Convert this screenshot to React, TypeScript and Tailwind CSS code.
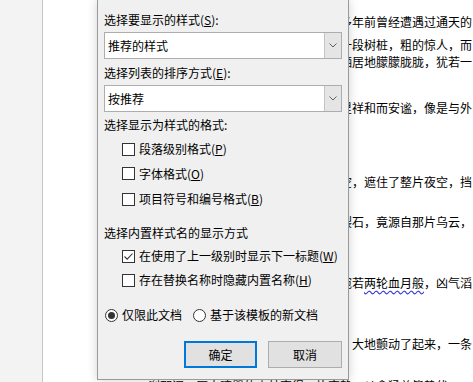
const cjk = { fontFamily: '"Noto Sans CJK SC", "Microsoft YaHei", sans-serif' };

function Box({ checked = false }: { checked?: boolean }) {
  return (
    <span className="w-[13px] h-[13px] border border-[#333333] bg-white flex items-center justify-center shrink-0">
      {checked && (
        <svg width="11" height="11" viewBox="0 0 11 11">
          <path d="M1.5 5.5 L4.2 8.2 L9.5 2.5" fill="none" stroke="#333333" strokeWidth="1.1" />
        </svg>
      )}
    </span>
  );
}

function Radio({ checked = false }: { checked?: boolean }) {
  return (
    <span className="w-[13px] h-[13px] rounded-full border border-[#333333] bg-white flex items-center justify-center shrink-0">
      {checked && <span className="w-[7px] h-[7px] rounded-full bg-[#333333]" />}
    </span>
  );
}

function Combo({ value }: { value: string }) {
  return (
    <div className="h-[27px] border border-[#adadad] bg-white flex">
      <div className="flex-1 flex items-center pl-[3px] text-[12px] text-black">{value}</div>
      <div className="w-[17px] bg-[#e5e5e5] border-l border-[#c4c4c4] flex items-center justify-center">
        <svg width="8" height="5" viewBox="0 0 8 5">
          <path d="M0.5 0.5 L4 4 L7.5 0.5" fill="none" stroke="#606060" strokeWidth="1" />
        </svg>
      </div>
    </div>
  );
}

function CheckRow({ label, keyChar, checked = false, cls }: { label: string; keyChar: string; checked?: boolean; cls: string }) {
  return (
    <div className={`${cls} flex items-center gap-[4px] pl-[18px] whitespace-nowrap`}>
      <Box checked={checked} />
      <span>
        {label}(<span className="underline">{keyChar}</span>)
      </span>
    </div>
  );
}

const docLines = [
  { text: "多年前曾经遭遇过通天的", cls: "mt-[14px]" },
  { text: "一段树桩，粗的惊人，而", cls: "mt-[7px]" },
  { text: "栖居地朦朦胧胧，犹若一", cls: "mt-[1px]" },
  { text: "里祥和而安谧，像是与外", cls: "mt-[30px]" },
  { text: "空，遮住了整片夜空，挡", cls: "mt-[58px]" },
  { text: "裂石，竟源自那片乌云，", cls: "mt-[24px]" },
];

function App() {
  return (
    <div className="relative w-[473px] h-[382px] overflow-hidden flex bg-white" style={cjk}>
      <div className="w-[43px] bg-[#f3f3f3] border-r border-[#c6c6c6]" />
      <div className="flex-1 bg-white flex flex-col pl-[297px] text-[12px] leading-[16px] text-black whitespace-nowrap">
        {docLines.map((l) => (
          <div key={l.text} className={l.cls}>
            {l.text}
          </div>
        ))}
        <div className="mt-[45px]">
          宛若
          <span className="underline decoration-wavy decoration-[#3b3bd6] underline-offset-2">两轮血月般</span>
          ，凶气滔
        </div>
        <div className="mt-[45px]">　大地颤动了起来，一条</div>
        <div className="mt-[26px] -ml-[192px]">刹那间，原本喧嚣的山林变得一片寂静，凶禽猛兽皆蛰伏，</div>
      </div>

      <div className="absolute left-[97px] top-0 w-[252px] h-[380px] bg-[#f0f0f0] border-x border-b border-[#9a9a9a] shadow-[0_0_10px_rgba(0,0,0,0.18)] flex flex-col px-[6px] pt-[8px] text-[12px] text-black">
        <div className="h-[24px] flex items-center">
          <span>
            选择要显示的样式(<span className="underline">S</span>):
          </span>
        </div>
        <Combo value="推荐的样式" />
        <div className="h-[26px] flex items-center pt-[2px]">
          <span>
            选择列表的排序方式(<span className="underline">E</span>):
          </span>
        </div>
        <Combo value="按推荐" />
        <div className="h-[25px] flex items-center pt-[1px]">选择显示为样式的格式:</div>
        <CheckRow cls="h-[24px]" label="段落级别格式" keyChar="P" />
        <CheckRow cls="h-[25px]" label="字体格式" keyChar="O" />
        <CheckRow cls="h-[26px]" label="项目符号和编号格式" keyChar="B" />
        <div className="mt-[9px] h-[24px] flex items-center">选择内置样式名的显示方式</div>
        <CheckRow cls="h-[22px]" label="在使用了上一级别时显示下一标题" keyChar="W" checked />
        <CheckRow cls="mt-[1px] h-[24px]" label="存在替换名称时隐藏内置名称" keyChar="H" />
        <div className="mt-[11px] h-[24px] flex items-center pl-[1px]">
          <div className="flex items-center gap-[4px]">
            <Radio checked />
            <span>仅限此文档</span>
          </div>
          <div className="flex items-center gap-[4px] ml-[11px]">
            <Radio />
            <span>基于该模板的新文档</span>
          </div>
        </div>
        <div className="mt-[14px] flex justify-end gap-[11px]">
          <button className="w-[73px] h-[27px] bg-[#e1e1e1] border-2 border-[#0078d7] text-[12px]">确定</button>
          <button className="w-[74px] h-[27px] bg-[#e1e1e1] border border-[#adadad] text-[12px]">取消</button>
        </div>
      </div>
    </div>
  );
}

export default App;
